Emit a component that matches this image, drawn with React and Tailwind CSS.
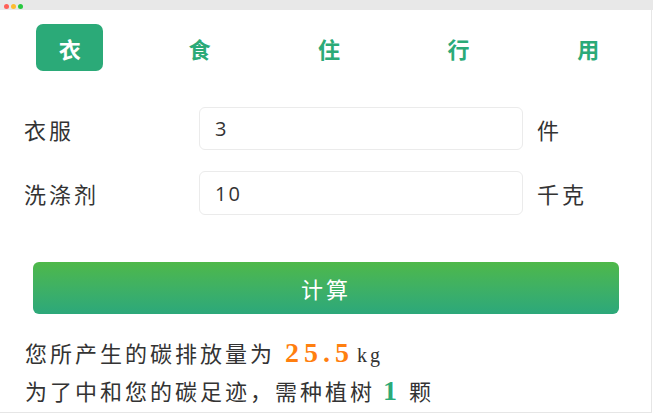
import { useState } from "react";

const tabs = ["衣", "食", "住", "行", "用"];

export default function App() {
  const [active, setActive] = useState(0);
  const [clothes, setClothes] = useState("3");
  const [detergent, setDetergent] = useState("10");

  const cjk = { fontFamily: '"Noto Sans CJK SC", "Noto Sans", sans-serif' };

  return (
    <div className="w-[653px] h-[414px] bg-white flex flex-col overflow-hidden text-[#333]" style={cjk}>
      {/* window chrome */}
      <div className="h-[10px] shrink-0 bg-[#e8e8e8] flex items-center gap-[2px] pl-[4px] pt-[2px]">
        <span className="w-[5px] h-[5px] rounded-full bg-[#ff5f57]" />
        <span className="w-[5px] h-[5px] rounded-full bg-[#febc2e]" />
        <span className="w-[5px] h-[5px] rounded-full bg-[#28c840]" />
      </div>

      <div className="w-[652px] h-[403px] border-r border-b border-[#e6e6e6] flex flex-col">
        {/* tabs */}
        <div className="grid grid-cols-5 w-[648px] ml-[5px] mt-[14px]">
          {tabs.map((t, i) => (
            <div key={t} className="flex justify-center">
              <button
                onClick={() => setActive(i)}
                className={`w-[67px] h-[47px] rounded-[7px] text-[22px] font-bold leading-none ${
                  i === active ? "bg-[#2baa78] text-white" : "text-[#2baa78]"
                }`}
              >
                {t}
              </button>
            </div>
          ))}
        </div>

        {/* form */}
        <div className="flex items-center mt-[36px]">
          <span className="w-[199px] pl-[24px] text-[22px] tracking-[3px] leading-none">衣服</span>
          <input
            value={clothes}
            onChange={(e) => setClothes(e.target.value)}
            className="w-[324px] h-[43px] rounded-[6px] border border-[#ebebeb] pl-[15px] text-[20px] tracking-[2px] outline-none"
            style={{ fontFamily: '"Open Sans", "Noto Sans", sans-serif' }}
          />
          <span className="ml-[14px] text-[22px] tracking-[3px] leading-none">件</span>
        </div>
        <div className="flex items-center mt-[21px]">
          <span className="w-[199px] pl-[24px] text-[22px] tracking-[3px] leading-none">洗涤剂</span>
          <input
            value={detergent}
            onChange={(e) => setDetergent(e.target.value)}
            className="w-[324px] h-[44px] rounded-[6px] border border-[#ebebeb] pl-[15px] text-[20px] tracking-[2px] outline-none"
            style={{ fontFamily: '"Open Sans", "Noto Sans", sans-serif' }}
          />
          <span className="ml-[14px] text-[22px] tracking-[3px] leading-none">千克</span>
        </div>

        {/* calculate */}
        <button className="ml-[33px] mt-[47px] w-[586px] h-[52px] rounded-[6px] bg-gradient-to-b from-[#4eb848] to-[#2ca87a] text-white text-[22px] tracking-[3px] leading-none">
          计算
        </button>

        {/* result */}
        <div className="mt-[18px] pl-[25px]">
          <div className="flex items-baseline h-[38px]">
            <span className="text-[22px] tracking-[3px]">您所产生的碳排放量为</span>
            <span
              className="ml-[10px] text-[28px] font-bold tracking-[5px] text-[#ff7f0f]"
              style={{ fontFamily: '"Liberation Serif", serif' }}
            >
              25.5
            </span>
            <span className="ml-[3px] text-[20px] tracking-[3px]" style={{ fontFamily: '"Liberation Serif", serif' }}>
              kg
            </span>
          </div>
          <div className="flex items-baseline h-[38px]">
            <span className="text-[22px] tracking-[3px]">为了中和您的碳足迹，需种植树</span>
            <span
              className="ml-[8px] text-[28px] font-bold text-[#2baa78]"
              style={{ fontFamily: '"Liberation Serif", serif' }}
            >
              1
            </span>
            <span className="ml-[12px] text-[22px] tracking-[3px]">颗</span>
          </div>
        </div>
      </div>
    </div>
  );
}
